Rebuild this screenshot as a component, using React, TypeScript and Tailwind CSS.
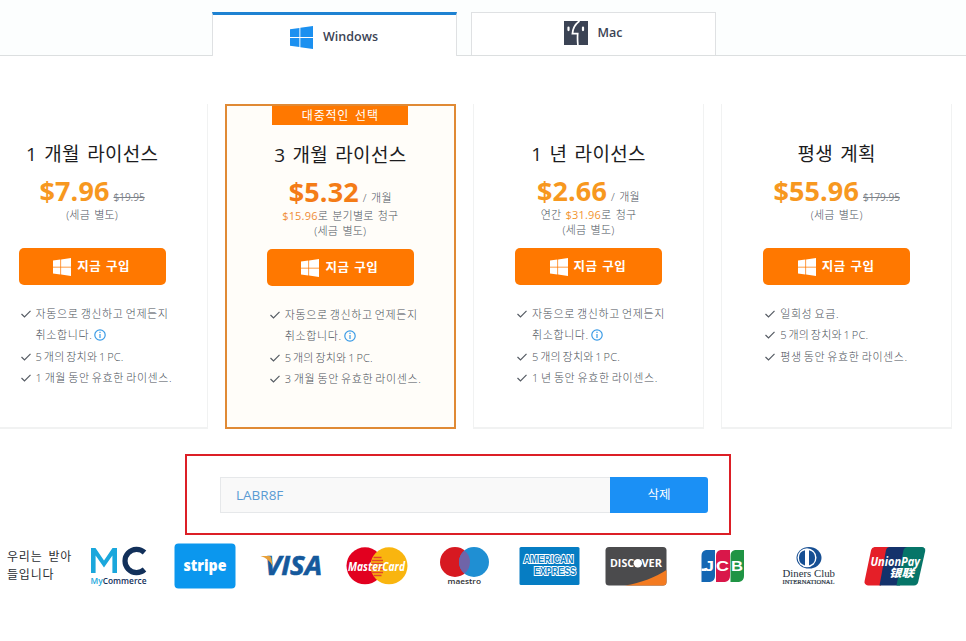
import React from 'react';
import clsx from 'clsx';

type Plan = {
  title: string;
  price: string;
  oldPrice?: string;
  billing?: React.ReactNode;
  popular?: boolean;
  features: { text: string; extra?: string; tight?: boolean }[];
};

const plans: Plan[] = [
  {
    title: '1 개월 라이선스',
    price: '$7.96',
    oldPrice: '$19.95',
    features: [
      { text: '자동으로 갱신하고 언제든지', extra: '취소합니다.' },
      { text: '5 개의 장치와 1 PC.', tight: true },
      { text: '1 개월 동안 유효한 라이센스.' },
    ],
  },
  {
    title: '3 개월 라이선스',
    price: '$5.32',
    popular: true,
    billing: (
      <>
        <span className="font-normal text-[#f08c35]">$15.96</span>로 분기별로 청구
      </>
    ),
    features: [
      { text: '자동으로 갱신하고 언제든지', extra: '취소합니다.' },
      { text: '5 개의 장치와 1 PC.', tight: true },
      { text: '3 개월 동안 유효한 라이센스.' },
    ],
  },
  {
    title: '1 년 라이선스',
    price: '$2.66',
    billing: (
      <>
        연간 <span className="font-normal text-[#f2942f]">$31.96</span>로 청구
      </>
    ),
    features: [
      { text: '자동으로 갱신하고 언제든지', extra: '취소합니다.' },
      { text: '5 개의 장치와 1 PC.', tight: true },
      { text: '1 년 동안 유효한 라이센스.' },
    ],
  },
  {
    title: '평생 계획',
    price: '$55.96',
    oldPrice: '$179.95',
    features: [
      { text: '일회성 요금.' },
      { text: '5 개의 장치와 1 PC.', tight: true },
      { text: '평생 동안 유효한 라이센스.' },
    ],
  },
];

function WindowsIcon({ className }: { className?: string }) {
  return (
    <svg viewBox="0 0 24 24" fill="currentColor" className={className}>
      <path d="M0 3.4 9.8 2v9.5H0zM10.8 1.9 24 0v11.5H10.8zM0 12.5h9.8V22L0 20.6zM10.8 12.5H24V24l-13.2-1.9z" />
    </svg>
  );
}

function MacIcon() {
  return (
    <svg viewBox="0 0 24 24" className="h-6 w-6">
      <path fill="#3b4354" d="M0 0h24v24H0z" />
      <g fill="none" stroke="#fff">
        <path strokeWidth="1.7" d="M15.5 0C11.3 3 8.800 7.5 8.400 12.700h5.300c-.3 3.700-.2 7.300.2 11.300" />
        <path strokeWidth="2.2" strokeLinecap="round" d="M4.5 6.500v2.600M19 6.500v2.600" />
      </g>
    </svg>
  );
}

function CheckIcon() {
  return (
    <svg viewBox="0 0 10 8" className="mt-[7px] h-2 w-2.5 shrink-0">
      <path d="M.5 4 3.5 6.900 9.500.8" fill="none" stroke="#555b63" strokeWidth="1.2" />
    </svg>
  );
}

function InfoIcon() {
  return (
    <svg viewBox="0 0 12 12" className="ml-0.5 mt-[5px] h-3 w-3">
      <circle cx="6" cy="6" r="5.2" fill="none" stroke="#3a9be6" strokeWidth="1.2" />
      <path d="M6 5v4M6 2.700v1.300" stroke="#3a9be6" strokeWidth="1.2" />
    </svg>
  );
}

function PlanCard({ title, price, oldPrice, billing, popular, features }: Plan) {
  return (
    <div
      className={clsx(
        'flex h-[325px] w-[231px] shrink-0 flex-col items-center',
        popular
          ? 'border-2 border-[#e08a35] bg-[#fffdf9]'
          : 'border-x border-b-2 border-[#f1f2f2] bg-white pt-px',
      )}
    >
      <div className="h-[35px]">
        {popular && (
          <div className="h-[19px] w-[136px] bg-[#ff7800] text-center text-[12px] leading-[19px] tracking-[0.8px] text-white [word-spacing:2px]">
            대중적인 선택
          </div>
        )}
      </div>
      <h2 className="h-[28px] text-[19px] leading-[28px] tracking-[0.3px] text-[#1c1c1e] [word-spacing:2px]">
        {title}
      </h2>
      <div className="flex h-[38px] items-baseline gap-1 pt-[7px] leading-[31px]">
        <b
          className={clsx(
            'text-[27px] tracking-[0.1px]',
            popular ? 'text-[#f47c17]' : 'text-[#f7981f]',
          )}
        >
          {price}
        </b>
        {oldPrice ? (
          <s className="text-[10px] text-[#7c8188]">{oldPrice}</s>
        ) : (
          <span className="text-[11px] font-light tracking-[0.3px] text-[#4d545e] [word-spacing:1px]">
            / 개월
          </span>
        )}
      </div>
      <div className="h-[42px] pt-px text-center text-[11px] font-light leading-[15px] tracking-[0.2px] text-[#4d545e] [word-spacing:1.2px]">
        {billing}
        <div>(세금 별도)</div>
      </div>
      <button className="flex h-[37px] w-[147px] items-center justify-center gap-1.5 rounded-[5px] bg-[#ff7800] pr-px pt-px text-[12.5px] font-bold tracking-[0.5px] text-white [word-spacing:1px]">
        <WindowsIcon className="h-[18px] w-[18px]" />
        지금 구입
      </button>
      <ul className="ml-[43px] mt-[18px] self-start text-[11px] font-light leading-[21.4px] tracking-[0.6px] text-[#4a5058] [word-spacing:-1.3px]">
        {features.map(({ text, extra, tight }) => (
          <li
            key={text}
            className={clsx('flex gap-[5px] whitespace-nowrap', tight && 'tracking-[0.2px]')}
          >
            <CheckIcon />
            <div>
              {text}
              {extra && (
                <div className="flex">
                  {extra}
                  <InfoIcon />
                </div>
              )}
            </div>
          </li>
        ))}
      </ul>
    </div>
  );
}

function Logo({ children }: { children: React.ReactNode }) {
  return (
    <svg viewBox="0 0 62 46" className="h-[46px] w-[62px] shrink-0 overflow-visible">
      {children}
    </svg>
  );
}

function PaymentLogos() {
  return (
    <div className="flex gap-[24.3px] font-['Open_Sans',sans-serif]">
      <Logo>
        <path d="M3 30V5h4.500l8.500 12.500L24.500 5H29v25h-4.600V12.500L16 24.500 7.600 12.500V30z" fill="#1aa7dc" />
        <path d="M56.500 9.500A11.600 11.600 0 1 0 56.500 26.500" fill="none" stroke="#12305a" strokeWidth="5.2" />
        <text x="2.5" y="40.500" fontSize="8.500" fontWeight="600" fill="#12305a" textLength="56" lengthAdjust="spacingAndGlyphs">
          <tspan fill="#1aa7dc">My</tspan>Commerce
        </text>
      </Logo>
      <Logo>
        <rect x="0.5" y="0.5" width="61" height="45" rx="4" fill="#0b97ee" />
        <text x="9.5" y="28" fontSize="16" fontWeight="800" fill="#fff" textLength="43" lengthAdjust="spacingAndGlyphs">
          stripe
        </text>
      </Logo>
      <Logo>
        <text x="5" y="32" fontSize="26.500" fontWeight="700" fontStyle="italic" fill="#15599c" stroke="#15599c" strokeWidth="0.6" textLength="57" lengthAdjust="spacingAndGlyphs">
          VISA
        </text>
        <path d="M.5 13h8.500c1.500 0 2 .8 2.300 2.200l1.500 8C10 18 6 14.500.5 13z" fill="#e8a13a" />
      </Logo>
      <Logo>
        <circle cx="19" cy="22.800" r="18.500" fill="#e2001f" />
        <circle cx="43" cy="22.800" r="18.500" fill="#f9b50f" />
        <path d="M27.500 14.500h8M26 17.500h11M25 20.500h12M25 23.500h12M25 26.500h12M26 29.500h11M27.500 32.500h8" fill="none" stroke="#e4442a" strokeWidth="1.3" />
        <text x="2" y="27.500" fontSize="12.500" fontWeight="700" fontStyle="italic" fill="#fff" textLength="57" lengthAdjust="spacingAndGlyphs">
          MasterCard
        </text>
      </Logo>
      <Logo>
        <circle cx="22" cy="19" r="15" fill="#d71921" />
        <circle cx="41" cy="19" r="15" fill="#1f8fd3" />
        <path d="M31.500 7.400a15 15 0 0 1 0 23.200 15 15 0 0 1 0-23.200z" fill="#6f64a8" />
        <text x="14.500" y="41" fontSize="7.500" fontWeight="600" fill="#2f2f33" textLength="33.500" lengthAdjust="spacingAndGlyphs">
          maestro
        </text>
      </Logo>
      <Logo>
        <rect x="0.5" y="4" width="60" height="38" rx="1.5" fill="#067dc3" />
        <g className="font-['Liberation_Sans',sans-serif]" fontWeight="700" fontSize="10" fill="#067dc3" stroke="#fff" strokeWidth="1.9" paintOrder="stroke">
          <text x="4.500" y="20" textLength="50" lengthAdjust="spacingAndGlyphs">AMERICAN</text>
          <text x="15" y="31.500" textLength="42" lengthAdjust="spacingAndGlyphs">EXPRESS</text>
        </g>
      </Logo>
      <Logo>
        <rect x="0.5" y="4" width="61" height="38.500" rx="3.500" fill="#4b4b4d" />
        <path d="M20 42.500C36 40 51 34 61.500 27v12a3.500 3.500 0 0 1-3.500 3.500z" fill="#f47b20" />
        <g fontSize="11" fontWeight="700" fill="#fff">
          <text x="5" y="24" textLength="24" lengthAdjust="spacingAndGlyphs">DISC</text>
          <text x="36.500" y="24" textLength="20.500" lengthAdjust="spacingAndGlyphs">VER</text>
        </g>
        <circle cx="32.800" cy="20.200" r="4.200" fill="#fff" />
      </Logo>
      <Logo>
        <path d="M14 7h9v26a6 6 0 0 1-5 6H9.500V13a6 6 0 0 1 4.500-6z" fill="#1467b3" />
        <path d="M28.500 7H38v26a6 6 0 0 1-5 6h-9V13a6 6 0 0 1 4.500-6z" fill="#d9174a" />
        <path d="M43 7h9v26a6 6 0 0 1-5 6h-8.500V13A6 6 0 0 1 43 7z" fill="#1f9444" />
        <g className="font-['Liberation_Sans',sans-serif]" fontSize="14" fontWeight="700" fill="#fff">
          <text x="12" y="28" textLength="10" lengthAdjust="spacingAndGlyphs">J</text>
          <text x="24" y="28" textLength="13" lengthAdjust="spacingAndGlyphs">C</text>
          <text x="39" y="28" textLength="12" lengthAdjust="spacingAndGlyphs">B</text>
        </g>
        <path d="M9.500 25.500h5V28h-5z" fill="#fff" />
      </Logo>
      <Logo>
        <ellipse cx="31" cy="14.800" rx="12.500" ry="10.800" fill="#174f93" />
        <circle cx="29" cy="14.800" r="9.500" fill="#fff" />
        <path d="M27 7.200a7.800 7.800 0 0 0 0 15.200zM31 7.200a7.800 7.800 0 0 1 0 15.200z" fill="#174f93" />
        <g className="font-['Liberation_Serif',serif]" fill="#26313d">
          <text x="4.500" y="34" fontSize="11" textLength="52.500" lengthAdjust="spacingAndGlyphs">Diners Club</text>
          <text x="4.500" y="41" fontSize="6.500" stroke="#26313d" strokeWidth="0.2" textLength="52" lengthAdjust="spacingAndGlyphs">INTERNATIONAL</text>
        </g>
      </Logo>
      <Logo>
        <path d="M10.500 4H26l-9 38.500H4A3.500 3.500 0 0 1 .6 38l6.500-31A4 4 0 0 1 10.500 4z" fill="#e51f28" />
        <path d="M25 4h20l-9 38.500H15.500L22 7a4 4 0 0 1 3-3z" fill="#14326b" />
        <path d="M43 4h15a3.300 3.300 0 0 1 3.200 4l-7 31a4.500 4.500 0 0 1-4.200 3.500H32.500L39.500 7A4 4 0 0 1 43 4z" fill="#067568" />
        <text x="6.500" y="23" fontSize="11.500" fontWeight="700" fontStyle="italic" fill="#fff" textLength="49.500" lengthAdjust="spacingAndGlyphs">
          UnionPay
        </text>
        <text x="25" y="34" fontSize="11" fontWeight="900" fontStyle="italic" fill="#fff" textLength="25" lengthAdjust="spacingAndGlyphs" className="font-['Noto_Sans_CJK_SC',sans-serif]">
          银联
        </text>
      </Logo>
    </div>
  );
}

export default function App() {
  return (
    <div className="h-[641px] w-[966px] overflow-hidden bg-white font-['Open_Sans','Noto_Sans_CJK_KR',sans-serif]">
      <div className="flex h-14 items-end gap-3.5 border-b border-[#dcdfe0] bg-[#fcfefe] pl-[212px] text-[12.5px] font-semibold text-[#3b4354]">
        <div className="-mb-px flex h-11 w-[245px] items-center justify-center gap-2.5 border-x border-t-[3px] border-x-[#dfe1e3] border-t-[#1e82d2] bg-white pr-px pt-[3px]">
          <WindowsIcon className="h-[23px] w-[23px] text-[#1b90f0]" />
          Windows
        </div>
        <div className="flex h-[43px] w-[245px] items-center justify-center gap-2.5 border-x border-t border-[#dfe1e3] bg-white pb-0.5 pr-px">
          <MacIcon />
          Mac
        </div>
      </div>
      <div className="-ml-[23.4px] mt-12 flex gap-[17.2px]">
        {plans.map((plan) => (
          <PlanCard key={plan.title} {...plan} />
        ))}
      </div>
      <div className="ml-[185px] mt-[25px] flex h-[81px] w-[546px] items-center border-2 border-[#dc1f26] pl-[33px]">
        <div className="flex h-9 w-[390px] items-center border border-r-0 border-[#e6e8ea] bg-[#f9f9f9] pl-[15px] pt-0.5 text-[13.5px] text-[#5a9bd3]">
          LABR8F
        </div>
        <button className="h-9 w-[98px] rounded-r-[3px] bg-[#1b90f5] pt-px text-[12.5px] text-white">
          삭제
        </button>
      </div>
      <div className="mt-2 flex h-[46px] items-center pl-[7px]">
        <p className="w-[80.5px] shrink-0 whitespace-nowrap text-[12px] leading-[18px] tracking-[0.8px] text-[#2c2f33] [word-spacing:2px]">
          우리는 받아
          <br />
          들입니다
        </p>
        <PaymentLogos />
      </div>
    </div>
  );
}
